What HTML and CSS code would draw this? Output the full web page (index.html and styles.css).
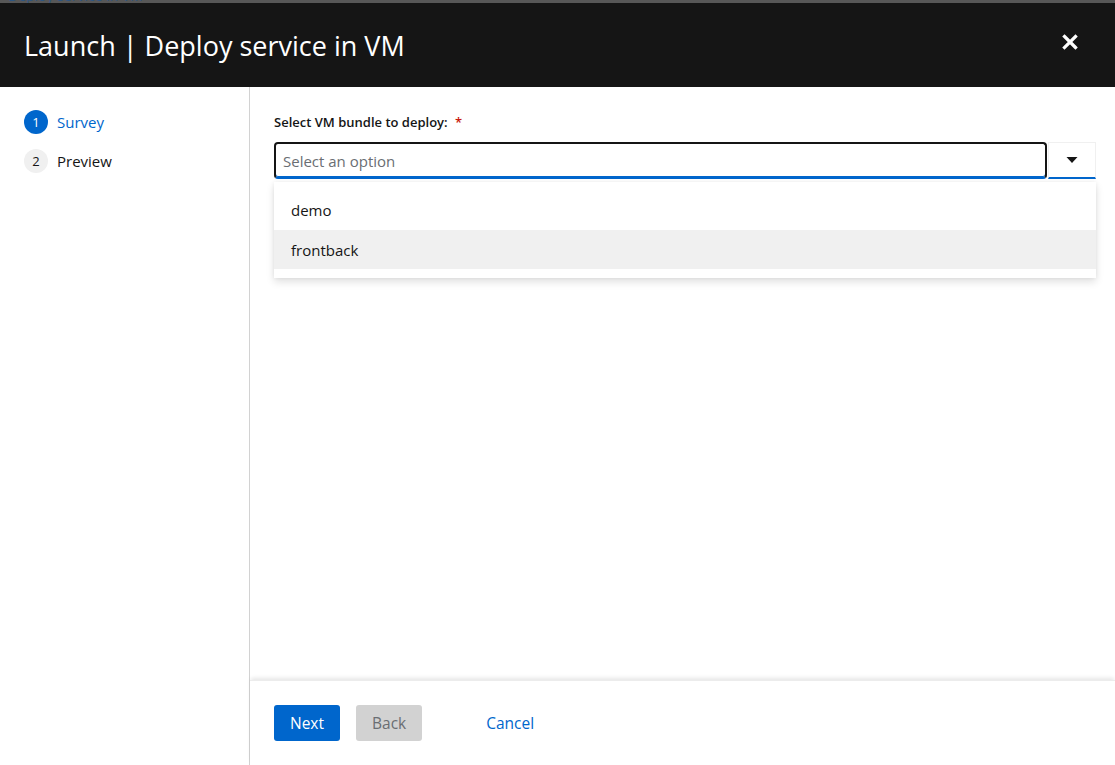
FILE: index.html
```html
<!DOCTYPE html>
<html>
<head>
<meta charset="utf-8">
<link rel="stylesheet" href="styles.css">
</head>
<body>
<div class="behind"><span class="behind-text">Deploy service in VM</span></div>
<header class="header">
  <h1 class="title">Launch | Deploy service in VM</h1>
  <button class="close" aria-label="Close">
    <svg width="16" height="16" viewBox="0 0 16 16"><path d="M2.5 2.5 L13.5 13.5 M13.5 2.5 L2.5 13.5" stroke="#fff" stroke-width="3.2" stroke-linecap="square"/></svg>
  </button>
</header>
<div class="wizard">
  <nav class="nav">
    <div class="nav-item current"><span class="num">1</span><span class="nav-label">Survey</span></div>
    <div class="nav-item"><span class="num">2</span><span class="nav-label">Preview</span></div>
  </nav>
  <div class="main">
    <div class="content">
      <div class="label">Select VM bundle to deploy: <span class="req">*</span></div>
      <div class="select">
        <div class="select-row">
          <div class="input">Select an option</div>
          <button class="toggle" aria-label="Toggle">
            <svg width="12" height="8" viewBox="0 0 12 8"><path d="M0.5 1 H11.5 L6 7 Z" fill="#151515"/></svg>
          </button>
        </div>
        <ul class="menu">
          <li class="option">demo</li>
          <li class="option hover">frontback</li>
        </ul>
      </div>
    </div>
    <footer class="footer">
      <button class="btn primary">Next</button>
      <button class="btn disabled">Back</button>
      <button class="btn link">Cancel</button>
    </footer>
  </div>
</div>
</body>
</html>
```
FILE: styles.css
```css
* { box-sizing: border-box; }
html, body { margin: 0; padding: 0; }
body {
  width: 1115px;
  height: 765px;
  overflow: hidden;
  background: #fff;
  font-family: "Open Sans", "Noto Sans", sans-serif;
  color: #151515;
}
.behind {
  height: 3px;
  background: #575757;
  overflow: hidden;
  padding-left: 8px;
}
.behind-text {
  display: block;
  margin-top: -11px;
  font-size: 14px;
  line-height: 14px;
  color: #2d5581;
}
.header {
  height: 84px;
  background: #151515;
  display: flex;
  align-items: center;
  justify-content: space-between;
  padding: 0 37px 0 24px;
}
.title {
  margin: 0;
  color: #fff;
  font-weight: 400;
  font-size: 27px;
  letter-spacing: 0;
}
.close {
  background: none;
  border: 0;
  padding: 0;
  display: flex;
  margin-top: -7px;
}
.wizard {
  display: flex;
  height: 678px;
}
.nav {
  width: 250px;
  border-right: 1px solid #d2d2d2;
  padding: 23px 24px;
  display: flex;
  flex-direction: column;
  gap: 15px;
}
.nav-item {
  display: flex;
  align-items: center;
  gap: 9px;
  font-size: 15px;
  color: #151515;
}
.num {
  width: 24px;
  height: 24px;
  border-radius: 50%;
  background: #f0f0f0;
  display: flex;
  align-items: center;
  justify-content: center;
  font-size: 13px;
  color: #151515;
}
.nav-item.current .num { background: #06c; color: #fff; }
.nav-item.current .nav-label { color: #06c; }
.main {
  flex: 1;
  display: flex;
  flex-direction: column;
}
.content {
  flex: 1;
  padding: 25px 19px 24px 24px;
}
.label {
  font-size: 13px;
  font-weight: 600;
  line-height: 20px;
  margin-bottom: 10px;
}
.req { color: #c9190b; margin-left: 4px; }
.select { position: relative; }
.select-row {
  display: flex;
  height: 37px;
}
.input {
  flex: 1;
  border: 2px solid #151515;
  border-radius: 4px;
  border-bottom-color: #06c;
  box-shadow: inset 0 -1px 0 #06c;
  padding: 0 7px;
  display: flex;
  align-items: center;
  font-size: 15px;
  color: #6a6e73;
}
.toggle {
  width: 48px;
  margin-left: 1px;
  background: #fff;
  border: 1px solid #f0f0f0;
  border-bottom: 2px solid #06c;
  display: flex;
  align-items: center;
  justify-content: center;
  padding: 0;
}
.menu {
  position: absolute;
  left: 0;
  right: 0;
  top: 40px;
  margin: 0;
  padding: 8px 0 9px;
  list-style: none;
  background: #fff;
  box-shadow: 0 4px 8px rgba(3,3,3,0.12), 0 0 4px rgba(3,3,3,0.06);
}
.option {
  height: 40px;
  display: flex;
  align-items: center;
  padding: 0 17px;
  font-size: 15px;
}
.option.hover { background: #f0f0f0; height: 39px; }
.footer {
  height: 85px;
  padding: 24px 24px;
  display: flex;
  align-items: flex-start;
  gap: 16px;
  box-shadow: 0 -3px 4px -1px rgba(3,3,3,0.1);
  border-top: 1px solid #ececec;
}
.btn {
  height: 36px;
  padding: 0 16px;
  border: 0;
  border-radius: 3px;
  font-family: inherit;
  font-size: 15.5px;
}
.primary { background: #06c; color: #fff; }
.disabled { background: #d2d2d2; color: #6a6e73; }
.link { background: none; color: #06c; margin-left: 32px; }
```
